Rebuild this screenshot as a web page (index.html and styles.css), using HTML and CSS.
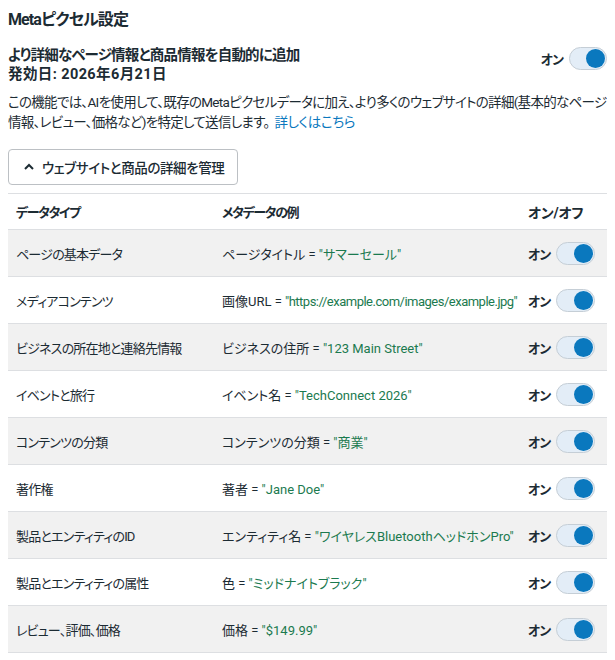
FILE: index.html
```html
<!DOCTYPE html>
<html lang="ja">
<head>
  <meta charset="UTF-8">
  <title>Metaピクセル設定</title>
  <link rel="stylesheet" href="styles.css">
</head>
<body>
  <h1 class="title">Metaピクセル設定</h1>

  <div class="feature">
    <div class="feature-head">
      <span class="head-main">より詳細なページ情報と商品情報を自動的に追加</span>
      <span class="head-date">発効日: 2026年6月21日</span>
    </div>
    <div class="switch-wrap">
      <span class="on-label">オン</span>
      <span class="switch"><span class="knob"></span></span>
    </div>
  </div>

  <p class="desc">
    この機能では、AIを使用して、既存のMetaピクセルデータに加え、より多くのウェブサイトの詳細(基本的なページ情報、レビュー、価格など)を特定して送信します。<a href="#">詳しくはこちら</a>
  </p>

  <button class="manage-btn">
    <svg width="12" height="12" viewBox="0 0 12 12"><path d="M2 8 L6 4 L10 8" fill="none" stroke="#1c2b33" stroke-width="2"/></svg>
    ウェブサイトと商品の詳細を管理
  </button>

  <table class="data-table">
    <thead>
      <tr><th class="c1">データタイプ</th><th class="c2">メタデータの例</th><th class="c3">オン/オフ</th></tr>
    </thead>
    <tbody>
      <tr><td>ページの基本データ</td><td class="ex">ページタイトル = <span class="val">"サマーセール"</span></td><td><span class="on-label">オン</span><span class="switch"><span class="knob"></span></span></td></tr>
      <tr><td>メディアコンテンツ</td><td class="ex">画像URL = <span class="val url">"https://example.com/images/example.jpg"</span></td><td><span class="on-label">オン</span><span class="switch"><span class="knob"></span></span></td></tr>
      <tr><td>ビジネスの所在地と連絡先情報</td><td class="ex">ビジネスの住所 = <span class="val">"123 Main Street"</span></td><td><span class="on-label">オン</span><span class="switch"><span class="knob"></span></span></td></tr>
      <tr><td>イベントと旅行</td><td class="ex">イベント名 = <span class="val">"TechConnect 2026"</span></td><td><span class="on-label">オン</span><span class="switch"><span class="knob"></span></span></td></tr>
      <tr><td>コンテンツの分類</td><td class="ex">コンテンツの分類 = <span class="val">"商業"</span></td><td><span class="on-label">オン</span><span class="switch"><span class="knob"></span></span></td></tr>
      <tr><td>著作権</td><td class="ex">著者 = <span class="val">"Jane Doe"</span></td><td><span class="on-label">オン</span><span class="switch"><span class="knob"></span></span></td></tr>
      <tr><td>製品とエンティティのID</td><td class="ex">エンティティ名 = <span class="val">"ワイヤレスBluetoothヘッドホンPro"</span></td><td><span class="on-label">オン</span><span class="switch"><span class="knob"></span></span></td></tr>
      <tr><td>製品とエンティティの属性</td><td class="ex">色 = <span class="val">"ミッドナイトブラック"</span></td><td><span class="on-label">オン</span><span class="switch"><span class="knob"></span></span></td></tr>
      <tr><td>レビュー、評価、価格</td><td class="ex">価格 = <span class="val">"$149.99"</span></td><td><span class="on-label">オン</span><span class="switch"><span class="knob"></span></span></td></tr>
    </tbody>
  </table>
</body>
</html>
```

FILE: styles.css
```css
body {
  font-family: Roboto, "Noto Sans CJK JP", sans-serif;
  font-feature-settings: "palt";
  color: #1c2b33;
  margin: 8px;
  font-size: 14px;
}
.title { font-size: 16px; font-weight: 700; margin: 2px 0 16px; line-height: 20px; letter-spacing: -0.9px; }

.feature { display: flex; justify-content: space-between; align-items: flex-start; }
.feature-head { font-size: 14.5px; line-height: 19px; font-weight: 700; }
.head-main, .head-date { display: block; }
.head-main { letter-spacing: -0.8px; }
.head-date { letter-spacing: 0.4px; }
.switch-wrap { display: flex; align-items: center; margin-top: 1px; }

.on-label { font-weight: 700; font-size: 13px; letter-spacing: -1px; margin-right: 6px; vertical-align: middle; }
.switch {
  display: inline-block; vertical-align: middle;
  width: 36px; height: 21px;
  background: #e3edf7; border: 1px solid #c5ced6;
  border-radius: 12px; position: relative;
}
.knob {
  position: absolute; right: 1px; top: 1px;
  width: 19px; height: 19px; border-radius: 50%;
  background: #0a78be;
}

.desc { margin: 8px 0 17px; line-height: 20px; font-size: 13.5px; letter-spacing: -0.7px; }
.desc a { color: #0a78be; text-decoration: none; margin-left: 5px; letter-spacing: -0.3px; }

.manage-btn {
  display: flex; align-items: center; gap: 7px;
  font-family: inherit; font-feature-settings: "palt";
  font-size: 13.5px; font-weight: 500; color: #1c2b33; letter-spacing: -0.4px;
  background: #fff; border: 1px solid #bcc0c4; border-radius: 4px;
  height: 36px; padding: 0 13px 0 14px;
  margin-bottom: 8px;
}

.data-table { width: 100%; border-collapse: collapse; table-layout: fixed; }
.data-table th, .data-table td {
  text-align: left; padding: 0 8px;
  border-top: 1px solid #dddfe2;
  white-space: nowrap;
}
.data-table th { height: 35px; font-weight: 700; font-size: 13px; letter-spacing: -1.4px; }
.data-table th.c3 { font-size: 14px; letter-spacing: -0.3px; }
.data-table td { height: 46px; font-size: 13px; letter-spacing: -0.8px; }
.data-table tbody tr:last-child td { border-bottom: 1px solid #dddfe2; }
.data-table tbody tr:nth-child(odd) { background: #f1f1f1; }
.data-table .c1 { width: 190px; }
.data-table .c2 { width: 290px; }
.data-table td.ex { font-size: 13px; letter-spacing: 0; overflow: visible; }
.data-table td .on-label { letter-spacing: -1px; }
.data-table td .switch { width: 37px; height: 21px; }
.data-table td .knob { width: 19px; height: 19px; }
.val { color: #1b7a4f; }
.val.url { letter-spacing: -0.5px; }
```
